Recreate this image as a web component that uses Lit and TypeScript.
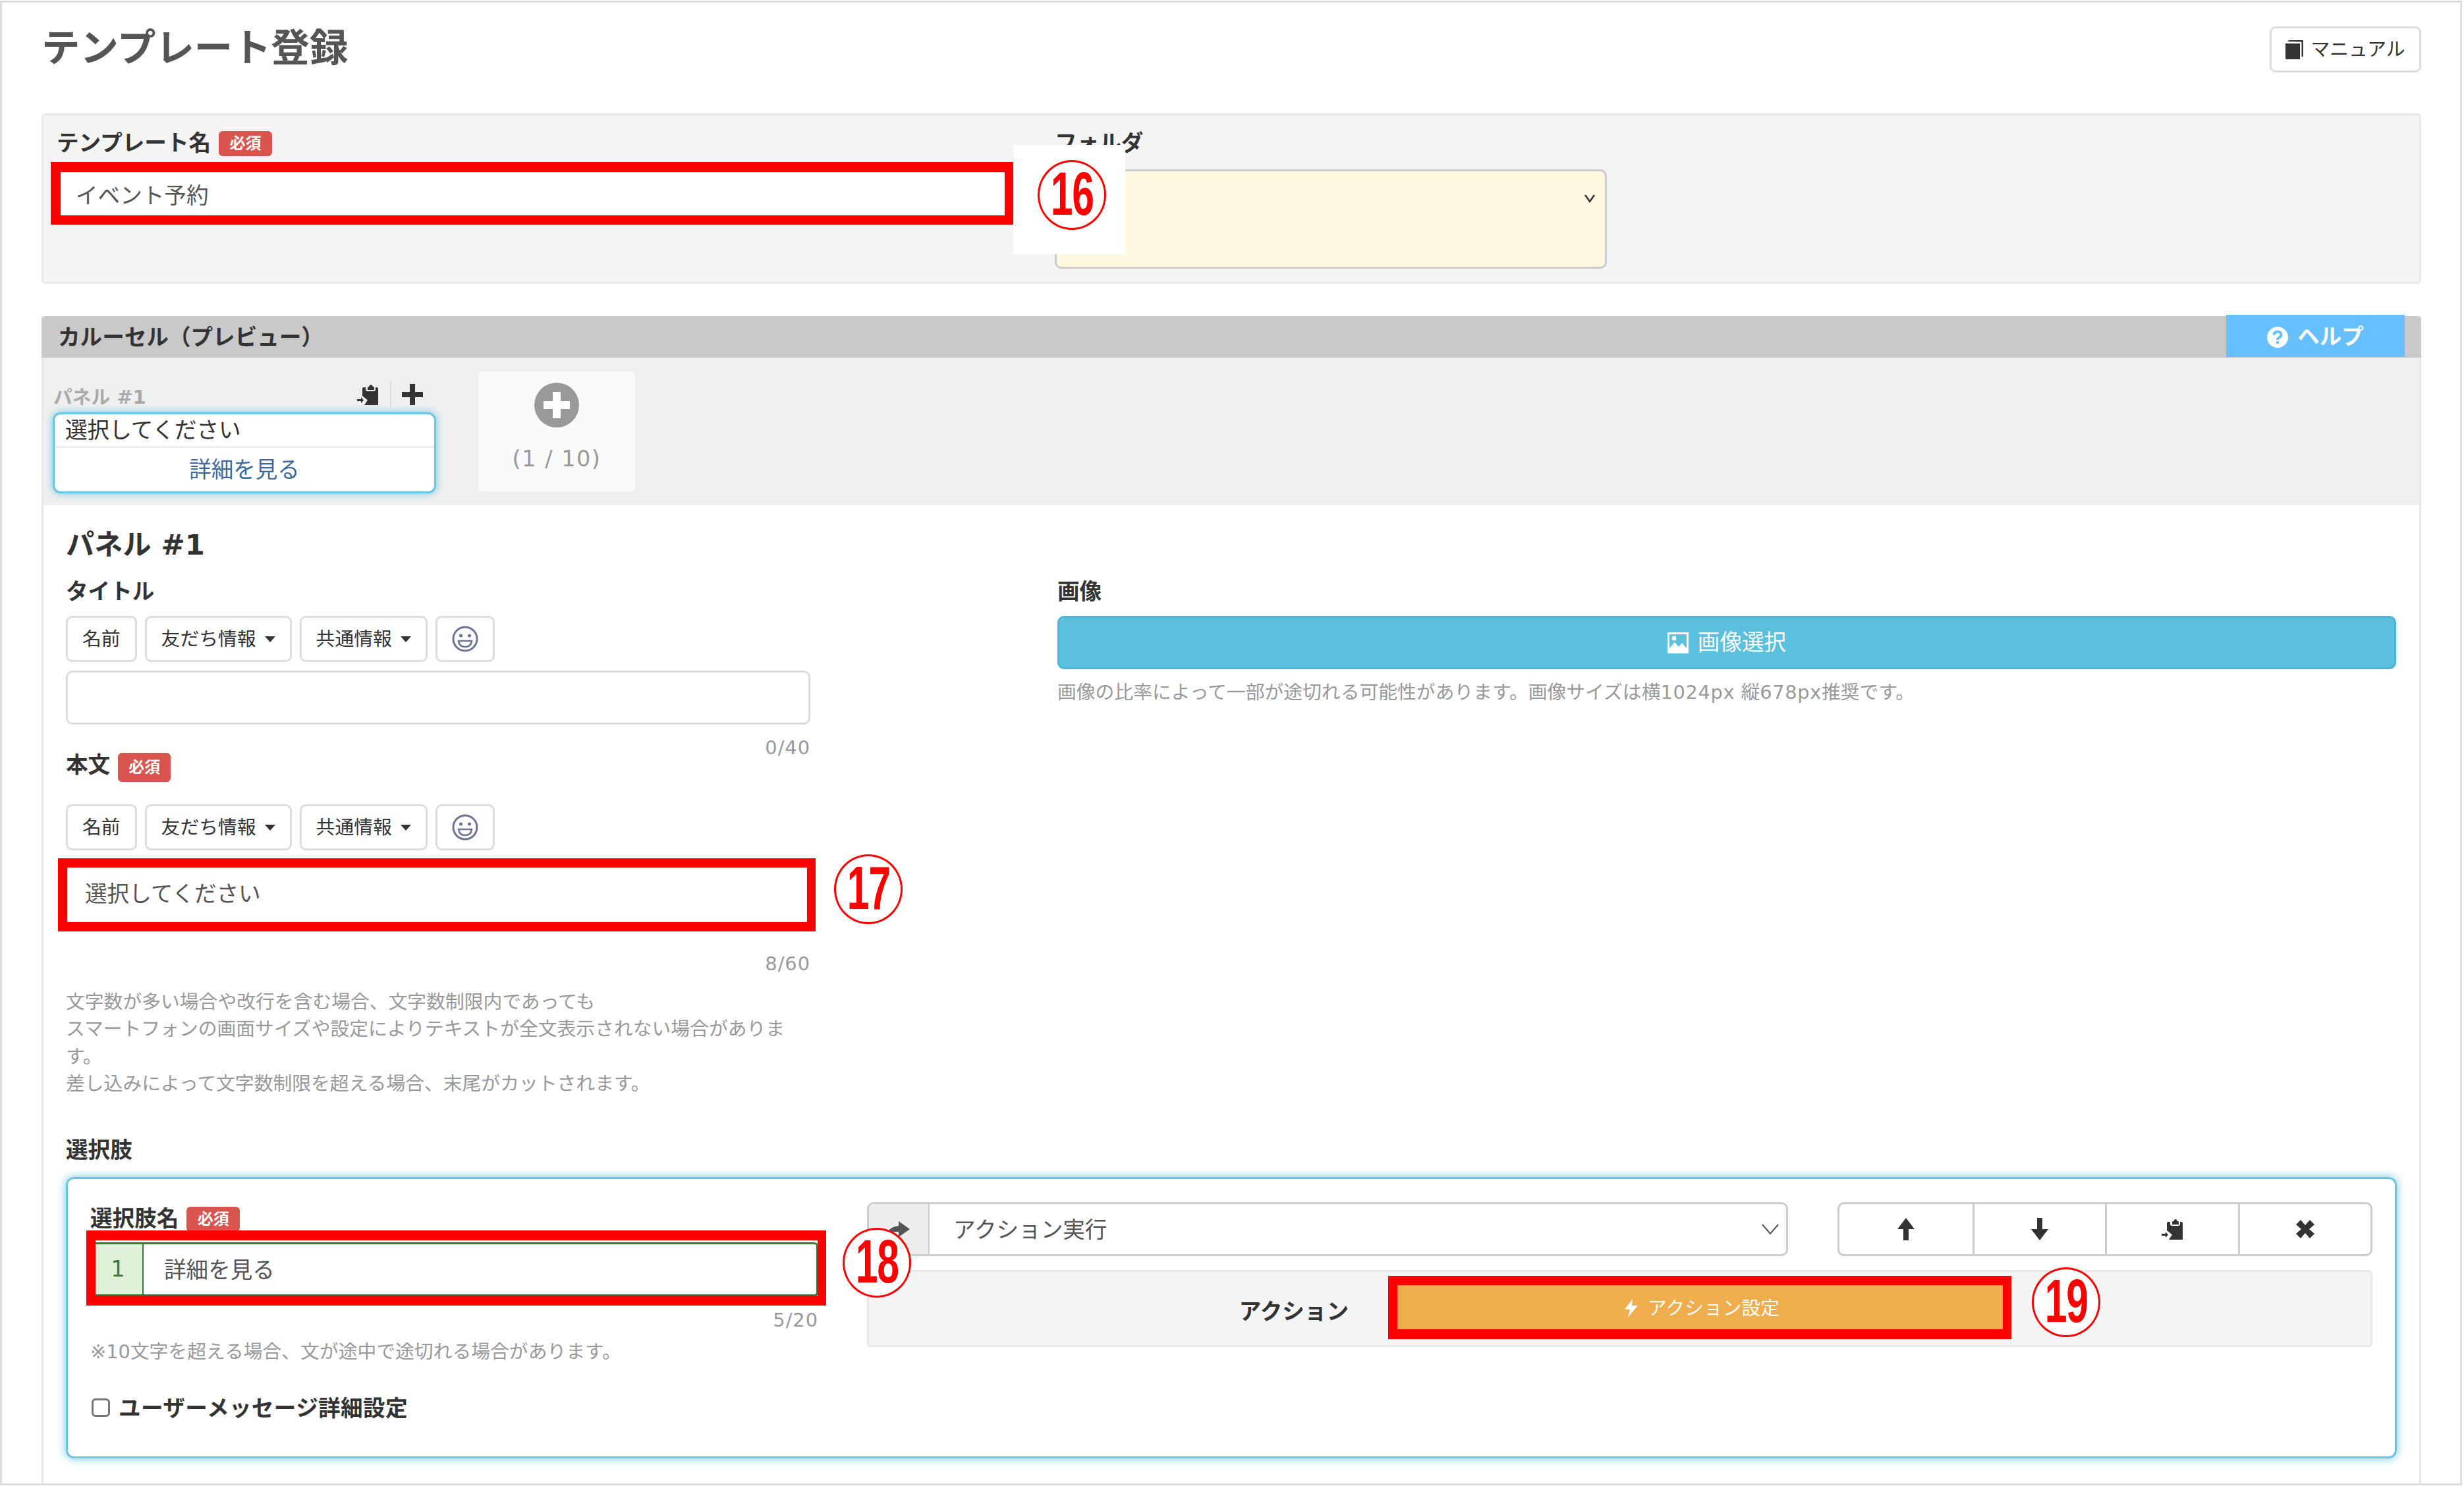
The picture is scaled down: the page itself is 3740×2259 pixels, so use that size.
import { LitElement, html, css, svg } from "lit";
import { customElement } from "lit/decorators.js";

const paste = svg`<path d="M8 7Q8 5 10 5H13V8Q13 11 16 11H25Q28 11 28 8V5H30Q32 5 32 7V32H11L16 24.500L8 18Z"/><path d="M16 9V5Q16 4 18 4Q19 1 21 1Q23 1 24 4Q26 4 26 5V9Z"/><path d="M0 23H6V20L10 24.500L6 29V26H0Z"/>`;

@customElement("app-root")
export class AppRoot extends LitElement {
  static styles = css`
    :host {
      display: block;
      position: relative;
      width: 3740px;
      height: 2259px;
      background: #fff;
      color: #333;
      font-family: "DejaVu Sans", "Noto Sans CJK JP", sans-serif;
      font-size: 33.6px;
      line-height: 48px;
      overflow: hidden;
    }
    * { box-sizing: border-box; }
    svg { display: block; flex: none; }
    .frame {
      margin-top: 1px;
      width: 3737px;
      height: 2254px;
      border: 3px solid #ddd;
      padding: 36px 59px 0 60px;
      display: flex;
      flex-direction: column;
    }
    .top { display: flex; justify-content: space-between; align-items: flex-start; height: 70px; margin-bottom: 62px; }
    h1 { margin: 0; font-size: 58.4px; line-height: 66px; font-weight: 700; color: #555; }
    .manual {
      width: 230px; height: 70px; border: 3px solid #ddd; border-radius: 9px;
      display: flex; align-items: center; justify-content: center; gap: 11px;
      font-size: 28.800px; color: #333; fill: #333;
    }
    .name-panel {
      height: 259px; background: #f4f4f4; border: 3px solid #e8e8e8; border-radius: 6px;
      padding: 20px; display: grid; grid-template-columns: 1444px 838px; column-gap: 71px;
      margin-bottom: 49px;
    }
    .lbl { font-weight: 700; display: flex; align-items: center; gap: 12px; height: 48px; padding-top: 4px; }
    .name-panel .lbl { height: 42px; margin-bottom: 20px; }
    .badge {
      display: inline-flex; align-items: center; justify-content: center;
      width: 81px; height: 38px; border-radius: 6px; background: #d9534f; color: #fff;
      font-size: 24px; line-height: 38px; font-weight: 700;
    }
    .text-input {
      height: 78px; background: #fff; border: 3px solid #ccc; border-radius: 10px;
      padding: 4px 0 0 26px; display: flex; align-items: center; color: #555;
    }
    .folder {
      position: relative; height: 151px; background: #fff8e1; border: 3px solid #ccc; border-radius: 10px;
      display: flex; justify-content: flex-end; padding: 35px 15px 0 0;
    }
    .section {
      flex: 1; border-left: 3px solid #e8e8e8; border-right: 3px solid #e8e8e8;
      margin-bottom: 0; display: flex; flex-direction: column;
    }
    .sec-head {
      height: 63px; background: #c9c9c9; border-radius: 6px 6px 0 0; margin: 0 -3px;
      display: flex; justify-content: space-between; align-items: flex-start;
      padding: 0 25px 0 25px; font-weight: 700;
    }
    .sec-head .t { line-height: 66px; }
    .help {
      width: 271px; height: 64px; margin-top: -2px; padding-top: 4px; background: #66bfff; color: #fff;
      display: flex; align-items: center; justify-content: center; gap: 14px; font-weight: 700;
    }
    .carousel { height: 224px; background: #efefef; display: flex; gap: 64px; padding: 21px 0 0 14px; }
    .cell { width: 582px; padding-top: 14px; }
    .cell-head {
      height: 42px; display: flex; align-items: center; justify-content: flex-end;
      margin-bottom: 6px; padding-right: 20px; fill: #333;
    }
    .cell-title { margin-right: auto; padding: 8px 0 0 1px; font-size: 28.800px; font-weight: 700; color: #aaa; }
    .sep { width: 2px; height: 42px; background: #ddd; margin: 0 16px 0 18px; }
    .card {
      height: 123px; background: #fff; border: 3px solid #6cc5e4; border-radius: 12px;
      box-shadow: 0 0 12px #6cc5e4;
    }
    .card-a { height: 51px; padding-left: 16px; line-height: 49px; border-bottom: 3px solid #eee; }
    .card-b { height: 66px; text-align: center; line-height: 68px; color: #3c6aa0; }
    .add {
      width: 238px; height: 182px; background: #fafafa; border-radius: 6px;
      display: flex; flex-direction: column; align-items: center; padding-top: 17px;
      color: #999; letter-spacing: 1.500px;
    }
    .add div { margin-top: 24px; }
    .main { flex: 1; padding: 30px 0 0 34px; }
    h2 { margin: 0 0 16px; font-size: 43.200px; line-height: 60px; font-weight: 700; }
    .cols { display: grid; grid-template-columns: 1130px 2032px; column-gap: 375px; }
    .tools { display: flex; gap: 12px; margin-top: 14px; }
    .tool {
      height: 70px; padding: 0 22px; border: 3px solid #ddd; border-radius: 9px;
      display: flex; align-items: center; gap: 13px; font-size: 28.800px;
    }
    .tool.emoji { width: 90px; padding: 0; justify-content: center; }
    .caret { width: 0; height: 0; border-left: 8.300px solid transparent; border-right: 8.300px solid transparent; border-top: 9px solid #333; }
    .box-input { height: 82px; margin-top: 13px; border: 3px solid #ddd; border-radius: 10px; }
    .count { text-align: right; font-size: 28.800px; line-height: 41px; color: #999; letter-spacing: 1px; }
    .count.c1 { margin-top: 15px; }
    .body-lbl { margin-top: -20px; }
    .body-lbl .badge { margin-top: 6px; height: 44px; width: 80px; }
    .tools.t2 { margin-top: 37px; }
    .area {
      height: 100px; margin-top: 13px; border: 3px solid #ddd; border-radius: 10px;
      padding: 27px 0 0 26px; color: #555;
    }
    .count.c2 { margin-top: 39px; }
    .note { font-size: 28.800px; line-height: 41.300px; color: #999; }
    .note.n1 { margin-top: 17px; }
    .img-btn {
      height: 81px; margin-top: 14px; background: #5bc0de; border: 3px solid #46b8da; border-radius: 10px;
      color: #fff; display: flex; align-items: center; justify-content: center; gap: 14px;
    }
    .note.n2 { margin-top: 15px; }
    .la { letter-spacing: .7px; }
    .sub { margin-top: 55px; margin-bottom: 18px; font-weight: 700; height: 48px; line-height: 52px; }
    .choice {
      width: 3538px; height: 427px; border: 3px solid #6cc5e4; border-radius: 12px;
      box-shadow: 0 0 14px #6cc5e4; padding: 35px 32px 0 34px;
      display: grid; grid-template-columns: 1105px 2285px; column-gap: 74px;
    }
    .group { height: 82px; margin-top: 13px; display: flex; border: 3px solid #3c763d; border-radius: 6px; color: #555; }
    .group .idx { width: 78px; background: #dff0d8; border-right: 2px solid #3c763d; color: #3c763d; display: flex; align-items: center; justify-content: center; padding-left: 2px; }
    .group .val { padding: 4px 0 0 31px; display: flex; align-items: center; }
    .count.c3 { margin-top: 16px; }
    .note.n3 { margin-top: 7px; line-height: 41px; }
    .chk { margin-top: 38px; padding-top: 4px; display: flex; align-items: center; gap: 13px; font-weight: 700; letter-spacing: .4px; }
    .chk input { appearance: none; margin: -4px 0 0 2px; width: 28px; height: 28px; background: #fff; border: 3px solid #777; border-radius: 6px; }
    .r1 { display: flex; justify-content: space-between; }
    .sel { width: 1398px; height: 82px; border: 3px solid #ccc; border-radius: 10px; display: flex; align-items: stretch; color: #555; overflow: hidden; }
    .sel .ad { width: 92px; background: #eee; border-right: 2px solid #ccc; display: flex; align-items: center; justify-content: flex-end; padding-right: 28px; fill: #555; }
    .sel .v { flex: 1; padding-left: 36px; line-height: 80px; }
    .sel .ch { align-self: center; margin-right: 11px; }
    .btns { width: 812px; height: 82px; border: 3px solid #ccc; border-radius: 10px; display: grid; grid-template-columns: repeat(4, 1fr); fill: #333; }
    .btns div { display: flex; align-items: center; justify-content: center; border-left: 3px solid #ccc; }
    .btns div:first-child { border-left: 0; }
    .action {
      height: 117px; margin-top: 21px; background: #f4f4f4; border: 3px solid #e8e8e8; border-radius: 6px;
      padding: 12px 0 0; display: grid; grid-template-columns: 728px 933px; column-gap: 66px;
    }
    .action .l { text-align: right; font-weight: 700; line-height: 48px; padding-top: 25px; }
    .orange {
      height: 82px; background: #f0ad4e; border: 3px solid #eea236; border-radius: 6px; color: #fff;
      padding: 3px 0 0 8px;
      font-size: 28.800px; display: flex; align-items: center; justify-content: center; gap: 15px; fill: #fff;
    }
    /* annotations lying over the page */
    .red { position: absolute; border: 14px solid #f00; box-shadow: inset 0 0 0 1px rgba(0,0,0,.08); }
    .r-a { left: 77px; top: 246px; width: 1461px; height: 95px; border-width: 15px 13px 14px 15px; }
    .r-b { left: 88px; top: 1303px; width: 1150px; height: 111px; border-width: 14px 13px 14px 14px; }
    .r-c { left: 131px; top: 1868px; width: 1123px; height: 114px; border-width: 15px 13px 15px 14px; }
    .r-d { left: 2107px; top: 1937px; width: 946px; height: 96px; border-width: 14px 13px 15px 14px; }
    .patch { position: absolute; left: 1538px; top: 220px; width: 170px; height: 166px; background: #fff; }
    .num {
      position: absolute; width: 104px; height: 106px; border: 3.500px solid #f00; border-radius: 50%; background: #fff;
      color: #f00; font-family: "Liberation Sans", sans-serif; font-weight: 700; font-size: 92px; line-height: 97px;
      display: flex; justify-content: center; letter-spacing: -2px;
    }
    .num span { display: block; transform: scaleX(.66); }
    .n-16 { left: 1575px; top: 243px; }
    .n-17 { left: 1266px; top: 1297px; }
    .n-18 { left: 1279px; top: 1864px; }
    .n-19 { left: 3084px; top: 1924px; }
  `;

  private tools(cls = "") {
    return html`<div class="tools ${cls}">
      <div class="tool">名前</div>
      <div class="tool">友だち情報<i class="caret"></i></div>
      <div class="tool">共通情報<i class="caret"></i></div>
      <div class="tool emoji">
        <svg width="40" height="40" viewBox="0 0 40 40" fill="none" stroke="#6b7296" stroke-width="3">
          <circle cx="20" cy="20" r="18"/>
          <circle cx="13.500" cy="15" r="2.500" fill="#6b7296" stroke="none"/>
          <circle cx="26.500" cy="15" r="2.500" fill="#6b7296" stroke="none"/>
          <path d="M10 23H30Q29 32 20 32Q11 32 10 23Z" stroke-width="2.500"/>
        </svg>
      </div>
    </div>`;
  }

  render() {
    return html`
      <div class="frame">
        <div class="top">
          <h1>テンプレート登録</h1>
          <div class="manual">
            <svg width="27" height="30" viewBox="0 0 27 30"><path d="M0 6H22V30H2Q0 30 0 28Z"/><path d="M3 3Q4 1 6 1H27V26H24.500V3.500Z"/></svg>
            マニュアル
          </div>
        </div>

        <div class="name-panel">
          <div>
            <div class="lbl">テンプレート名<span class="badge">必須</span></div>
            <div class="text-input">イベント予約</div>
          </div>
          <div>
            <div class="lbl">フォルダ</div>
            <div class="folder">
              <svg width="16" height="13" viewBox="0 0 16 13" fill="none" stroke="#333" stroke-width="2.500"><path d="M1 1L8 11L15 1"/></svg>
            </div>
          </div>
        </div>

        <div class="section">
          <div class="sec-head">
            <div class="t">カルーセル（プレビュー）</div>
            <div class="help">
              <svg width="32" height="32" viewBox="0 0 32 32"><circle cx="16" cy="16" r="16" fill="#fff"/><path d="M10.500 12.500Q11 7.500 16 7.500Q21.500 7.500 21.500 12Q21.500 15 18.500 16.500Q16 17.500 16 20" fill="none" stroke="#66bfff" stroke-width="4"/><rect x="14" y="22" width="4" height="4" fill="#66bfff"/></svg>
              ヘルプ
            </div>
          </div>

          <div class="carousel">
            <div class="cell">
              <div class="cell-head">
                <span class="cell-title">パネル #1</span>
                <svg width="32" height="32" viewBox="0 0 32 32">${paste}</svg>
                <i class="sep"></i>
                <svg width="32" height="32" viewBox="0 0 32 32"><path d="M12 0H20V12H32V20H20V32H12V20H0V12H12Z"/></svg>
              </div>
              <div class="card">
                <div class="card-a">選択してください</div>
                <div class="card-b">詳細を見る</div>
              </div>
            </div>
            <div class="add">
              <svg width="68" height="68" viewBox="0 0 68 68"><circle cx="34" cy="34" r="34" fill="#999"/><path d="M28 14H40V28H54V40H40V54H28V40H14V28H28Z" fill="#fff"/></svg>
              <div>(1 / 10)</div>
            </div>
          </div>

          <div class="main">
            <h2>パネル #1</h2>
            <div class="cols">
              <div>
                <div class="lbl">タイトル</div>
                ${this.tools()}
                <div class="box-input"></div>
                <div class="count c1">0/40</div>
                <div class="lbl body-lbl">本文<span class="badge">必須</span></div>
                ${this.tools("t2")}
                <div class="area">選択してください</div>
                <div class="count c2">8/60</div>
                <div class="note n1">文字数が多い場合や改行を含む場合、文字数制限内であっても<br />スマートフォンの画面サイズや設定によりテキストが全文表示されない場合があります。<br />差し込みによって文字数制限を超える場合、末尾がカットされます。</div>
              </div>
              <div>
                <div class="lbl">画像</div>
                <div class="img-btn">
                  <svg width="32" height="32" viewBox="0 0 32 32" fill="#fff"><path fill-rule="evenodd" d="M0 0H32V32H0ZM3 3V24L11 15L17 22L22 16L29 24V3Z"/><circle cx="10" cy="9" r="3.500"/></svg>
                  画像選択
                </div>
                <div class="note n2">画像の比率によって一部が途切れる可能性があります。画像サイズは横<span class="la">1024px</span> 縦<span class="la">678px</span>推奨です。</div>
              </div>
            </div>

            <div class="sub">選択肢</div>
            <div class="choice">
              <div>
                <div class="lbl">選択肢名<span class="badge">必須</span></div>
                <div class="group">
                  <div class="idx">1</div>
                  <div class="val">詳細を見る</div>
                </div>
                <div class="count c3">5/20</div>
                <div class="note n3">※10文字を超える場合、文が途中で途切れる場合があります。</div>
                <label class="chk"><input type="checkbox" />ユーザーメッセージ詳細設定</label>
              </div>
              <div>
                <div class="r1">
                  <div class="sel">
                    <div class="ad"><svg width="36" height="24" viewBox="0 0 36 24"><path d="M0 24Q2 9 19 7V0L36 12L19 24V16Q6 15 0 24Z"/></svg></div>
                    <div class="v">アクション実行</div>
                    <svg class="ch" width="26" height="16" viewBox="0 0 26 16" fill="none" stroke="#555" stroke-width="2"><path d="M1 1L13 15L25 1"/></svg>
                  </div>
                  <div class="btns">
                    <div><svg width="26" height="34" viewBox="0 0 26 34"><path d="M13 0L26 17H17V34H9V17H0Z"/></svg></div>
                    <div><svg width="26" height="34" viewBox="0 0 26 34"><path d="M9 0H17V17H26L13 34L0 17H9Z"/></svg></div>
                    <div><svg width="32" height="32" viewBox="0 0 32 32">${paste}</svg></div>
                    <div><svg width="28" height="28" viewBox="0 0 28 28"><path d="M7 0L14 8L21 0L28 7L20 14L28 21L21 28L14 20L7 28L0 21L8 14L0 7Z"/></svg></div>
                  </div>
                </div>
                <div class="action">
                  <div class="l">アクション</div>
                  <div class="orange">
                    <svg width="20" height="28" viewBox="0 0 20 28"><path d="M12 0L0 16H8L5 28L20 10H11Z"/></svg>
                    アクション設定
                  </div>
                </div>
              </div>
            </div>
          </div>
        </div>
      </div>

      <div class="patch"></div>
      <div class="red r-a"></div>
      <div class="red r-b"></div>
      <div class="red r-c"></div>
      <div class="red r-d"></div>
      <div class="num n-16"><span>16</span></div>
      <div class="num n-17"><span>17</span></div>
      <div class="num n-18"><span>18</span></div>
      <div class="num n-19"><span>19</span></div>
    `;
  }
}
